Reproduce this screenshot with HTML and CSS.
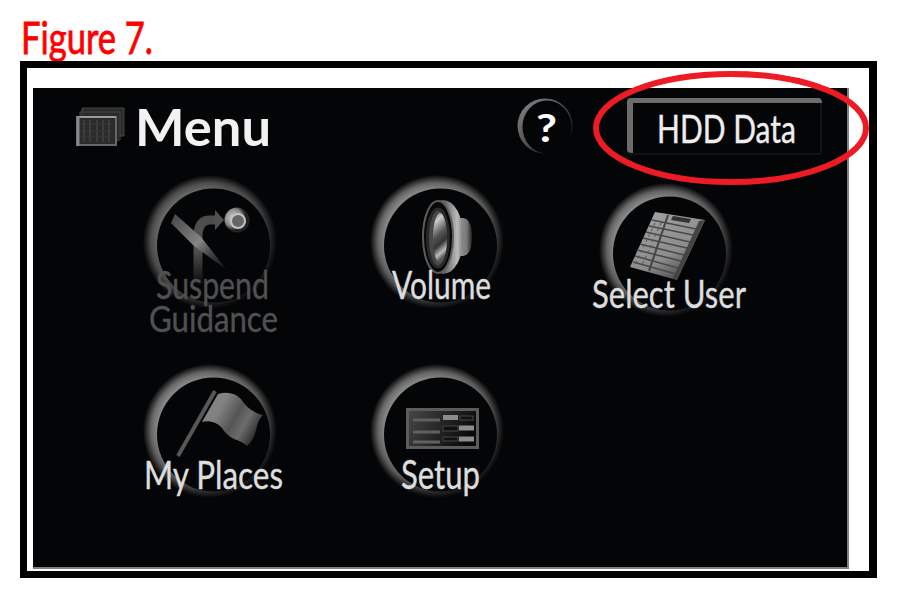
FILE: index.html
```
<!DOCTYPE html>
<html lang="en">
<head>
    <meta charset="UTF-8">
    <meta name="viewport" content="width=device-width, initial-scale=1.0">
    <title>Figure 7</title>
    <link rel="stylesheet" href="styles.css">
</head>
<body>
    <!-- Shared gradients and the round button ring -->
    <svg class="defs" width="0" height="0">
        <defs>
            <radialGradient id="glow">
                <stop offset="0.8" stop-color="#8c8c8c"/>
                <stop offset="0.88" stop-color="#6c6c6c"/>
                <stop offset="0.95" stop-color="#303030"/>
                <stop offset="1" stop-color="#040507"/>
            </radialGradient>
            <linearGradient id="fade" x1="0.15" y1="0.15" x2="0.85" y2="0.9">
                <stop offset="0" stop-color="#fff"/>
                <stop offset="0.5" stop-color="#ccc"/>
                <stop offset="1" stop-color="#444"/>
            </linearGradient>
            <mask id="ringMask" maskUnits="userSpaceOnUse" x="30" y="-5" width="140" height="140">
                <rect x="30" y="-5" width="140" height="140" fill="url(#fade)"/>
            </mask>
            <linearGradient id="edge" x1="0" y1="0" x2="1" y2="1">
                <stop offset="0" stop-color="#888"/>
                <stop offset="0.5" stop-color="#505050"/>
                <stop offset="0.9" stop-color="#08090b"/>
            </linearGradient>
            <linearGradient id="road" gradientUnits="userSpaceOnUse" x1="0" y1="38" x2="0" y2="108">
                <stop offset="0" stop-color="#4c4c4c"/>
                <stop offset="0.5" stop-color="#505050"/>
                <stop offset="1" stop-color="#08090b"/>
            </linearGradient>
            <linearGradient id="slash" x1="0" y1="0" x2="1" y2="1">
                <stop offset="0" stop-color="#444"/>
                <stop offset="0.5" stop-color="#858585"/>
                <stop offset="0.7" stop-color="#444"/>
                <stop offset="1" stop-color="#08090b"/>
            </linearGradient>
            <radialGradient id="ball" cx="0.35" cy="0.4">
                <stop offset="0" stop-color="#ccc"/>
                <stop offset="0.7" stop-color="#888"/>
                <stop offset="1" stop-color="#222"/>
            </radialGradient>
            <linearGradient id="cone" x1="0" y1="0" x2="1" y2="0">
                <stop offset="0" stop-color="#333"/>
                <stop offset="0.55" stop-color="#666"/>
                <stop offset="0.85" stop-color="#bbb"/>
                <stop offset="1" stop-color="#777"/>
            </linearGradient>
            <linearGradient id="magnet" x1="0" y1="0" x2="1" y2="0">
                <stop offset="0" stop-color="#aaa"/>
                <stop offset="0.7" stop-color="#777"/>
                <stop offset="1" stop-color="#222"/>
            </linearGradient>
            <linearGradient id="core" x1="0" y1="0" x2="0.25" y2="1">
                <stop offset="0" stop-color="#555"/>
                <stop offset="0.2" stop-color="#ccc"/>
                <stop offset="0.5" stop-color="#555"/>
                <stop offset="0.7" stop-color="#333"/>
                <stop offset="0.88" stop-color="#bbb"/>
                <stop offset="1" stop-color="#555"/>
            </linearGradient>
            <linearGradient id="flag" x1="0" y1="0" x2="1" y2="0.5">
                <stop offset="0" stop-color="#858585"/>
                <stop offset="0.35" stop-color="#828282"/>
                <stop offset="0.62" stop-color="#555"/>
                <stop offset="0.8" stop-color="#6c6c6c"/>
                <stop offset="1" stop-color="#333"/>
            </linearGradient>
            <linearGradient id="paper" x1="0" y1="0" x2="0.6" y2="1">
                <stop offset="0" stop-color="#a5a5a5"/>
                <stop offset="0.7" stop-color="#8c8c8c"/>
                <stop offset="1" stop-color="#505050"/>
            </linearGradient>
            <linearGradient id="panel" x1="0" y1="0" x2="1" y2="0.3">
                <stop offset="0" stop-color="#484848"/>
                <stop offset="1" stop-color="#0a0a0a"/>
            </linearGradient>
            <g id="ring">
                <circle cx="100" cy="65" r="67" fill="url(#glow)" mask="url(#ringMask)"/>
                <ellipse cx="103.500" cy="68.500" rx="56.500" ry="57" fill="#040507"/>
            </g>
        </defs>
    </svg>

    <figure class="figure">
        <figcaption class="caption">
            <svg width="140" height="61">
                <text x="1" y="53.5" font-size="44.5" textLength="132" lengthAdjust="spacingAndGlyphs">Figure 7.</text>
            </svg>
        </figcaption>

        <div class="frame">
            <div class="screen">
                <header class="header">
                    <svg class="menu-icon" width="50" height="42" viewBox="0 0 50 42">
                        <path d="M7 2h42v28h-4l-4 9V10H5z" fill="#2b2b2b"/>
                        <path d="M7 9V2h42v28h-4M5 10V6h40v28h-4" fill="none" stroke="#444"/>
                        <rect x="2" y="11" width="39" height="28" fill="#2b2b2b" stroke="#666" stroke-width="2"/>
                        <path d="M2 11h39" stroke="#999" stroke-width="2"/>
                        <path d="M3 10v30" stroke="#888" stroke-width="3"/>
                        <path d="M9 14v22M15 14v22M22 14v22M28 14v22M34 14v22" stroke="#3c3c3c" stroke-width="2"/>
                        <path d="M6 18h32M6 25h32M6 31h32" stroke="#383838"/>
                    </svg>
                    <svg class="title" width="140" height="64">
                        <text x="-1" y="58" font-size="52" textLength="136" lengthAdjust="spacingAndGlyphs">Menu</text>
                    </svg>
                    <svg class="help" width="58" height="60" viewBox="0 0 58 60">
                        <circle cx="29" cy="30" r="27.5" fill="url(#edge)"/>
                        <ellipse cx="31" cy="31" rx="24.500" ry="26.500" fill="#040507"/>
                        <text x="20" y="46" font-size="39" textLength="21" lengthAdjust="spacingAndGlyphs">?</text>
                    </svg>
                    <svg class="hdd" width="198" height="60" viewBox="0 0 198 60">
                        <rect x="1" y="1" width="195" height="57" rx="4" fill="#121315"/>
                        <path d="M1 53V5q0-4 4-4h187q4 0 4 5H7v50q-6 0-6-3z" fill="#6c6c6c"/>
                        <rect x="7" y="6" width="187" height="50" fill="#040507"/>
                        <text x="31" y="45.500" font-size="39" textLength="139" lengthAdjust="spacingAndGlyphs">HDD Data</text>
                    </svg>
                </header>

                <main class="menu">
                    <svg class="item dim" viewBox="0 0 200 160">
                        <use href="#ring" opacity="0.75"/>
                        <path d="M88 108V60q0-17 12-17h7" fill="none" stroke="url(#road)" stroke-width="9"/>
                        <path d="M105 33l9 10-9 10z" fill="#505050"/>
                        <path d="M65 37l26 23 26 33-33-24L61 46z" fill="url(#slash)"/>
                        <circle cx="127" cy="43" r="12.500" fill="url(#ball)"/>
                        <circle cx="128" cy="44" r="7" fill="#666" stroke="#c4c4c4" stroke-width="2"/>
                        <text x="46" y="122" font-size="38" textLength="113" lengthAdjust="spacingAndGlyphs">Suspend</text>
                        <text x="39" y="155" font-size="37" textLength="129" lengthAdjust="spacingAndGlyphs">Guidance</text>
                    </svg>
                    <svg class="item" viewBox="0 0 200 160">
                        <use href="#ring"/>
                        <path d="M118 41h8q9 1 9 19t-9 19h-8z" fill="url(#magnet)"/>
                        <ellipse cx="106" cy="60" rx="20.500" ry="37" fill="url(#cone)"/>
                        <ellipse cx="101" cy="60" rx="15" ry="36" fill="#070707" stroke="#5c5c5c" stroke-width="2"/>
                        <ellipse cx="101" cy="61" rx="10.500" ry="29" fill="#484848" stroke="#292929" stroke-width="3"/>
                        <ellipse cx="103" cy="61" rx="7" ry="25" fill="url(#core)"/>
                        <text x="55" y="122" font-size="39" textLength="99" lengthAdjust="spacingAndGlyphs">Volume</text>
                    </svg>
                    <svg class="item lower" viewBox="0 0 200 160">
                        <use href="#ring"/>
                        <path d="M89 27l50 8-28 60-47-13z" fill="url(#paper)"/>
                        <path d="M107 31l18 3-2 4-18-3z" fill="#333"/>
                        <path d="M139 35l-28 60-4-2 26-57z" fill="#444"/>
                        <path d="M86 35l44 9M83 41l44 9M80 47l44 10M77 53l44 10M74 59l44 11M71 65l44 11M69 71l43 12M67 77l43 12" stroke="#484848" stroke-width="1.500"/>
                        <path d="M102 30L83 86" stroke="#444" stroke-width="2"/>
                        <path d="M89 38L70 78M95 38L76 80" stroke="#555" stroke-dasharray="3 3"/>
                        <text x="26" y="123" font-size="39" textLength="154" lengthAdjust="spacingAndGlyphs">Select User</text>
                    </svg>
                    <svg class="item" viewBox="0 0 200 160">
                        <use href="#ring"/>
                        <path d="M105 25L68 90" stroke="#575757" stroke-width="4"/>
                        <path d="M108 28q14-4 23 5 8 13 22 16-5 5-7 15-2 10-9 16-4-4-13-7-8-4-12-11-8-9-20-6z" fill="url(#flag)"/>
                        <text x="34" y="123" font-size="39" textLength="139" lengthAdjust="spacingAndGlyphs">My Places</text>
                    </svg>
                    <svg class="item" viewBox="0 0 200 160">
                        <use href="#ring"/>
                        <rect x="70.500" y="43.500" width="70" height="38" fill="url(#panel)" stroke="#5c5c5c" stroke-width="3"/>
                        <path d="M76 54h27M76 66h27M76 76h27" stroke="#606060" stroke-width="3"/>
                        <g fill="#111" stroke="#484848">
                            <rect x="106" y="60" width="15" height="5"/>
                            <rect x="106" y="71" width="15" height="4"/>
                            <rect x="123" y="50" width="13" height="4"/>
                        </g>
                        <path d="M106 51.500h15M122 62h15M122 73h15" stroke="#8c8c8c" stroke-width="5"/>
                        <text x="64" y="123" font-size="40" textLength="79" lengthAdjust="spacingAndGlyphs">Setup</text>
                    </svg>
                </main>
            </div>
            <svg class="highlight" width="280" height="118" viewBox="0 0 280 118">
                <ellipse cx="140" cy="59" rx="135" ry="54"/>
            </svg>
        </div>
    </figure>
</body>
</html>
```
FILE: styles.css
```
* {
    margin: 0;
    padding: 0;
    box-sizing: border-box;
}

body {
    background: #fff;
    font-family: Lato, 'Open Sans', sans-serif;
    overflow: hidden;
}

svg {
    display: block;
    flex-shrink: 0;
    overflow: visible;
}

.defs {
    position: absolute;
}

.figure {
    width: 857px;
    margin-left: 20px;
}

.caption {
    height: 61px;
}

.caption text {
    fill: #f00;
    stroke: #f00;
    stroke-width: 0.8px;
}

.frame {
    position: relative;
    height: 517px;
    padding: 20px 20px 2px 6px;
    border: 7px solid #000;
    border-right-width: 8px;
}

.screen {
    width: 816px;
    height: 481px;
    background: #040507;
    border-right: 2px solid #808080;
    border-bottom: 2px solid #808080;
}

.header {
    display: flex;
    height: 89px;
}

.menu-icon {
    margin: 18px 0 0 42px;
}

.title {
    margin-left: 11px;
}

.title text {
    fill: #f2f2f2;
    font-weight: 700;
}

.help {
    margin: 8px 0 0 240px;
}

.help text {
    fill: #fff;
    font-weight: 700;
}

.hdd {
    margin: 9px 0 0 52px;
}

.hdd text {
    fill: #eee;
    stroke: #eee;
    stroke-width: 0.4px;
}

.menu {
    display: grid;
    grid-template-columns: 227px 229px 200px;
    grid-template-rows: 189px 160px;
    margin-left: 77px;
}

.item {
    width: 200px;
    height: 160px;
}

.item text {
    fill: #ddd;
    stroke: #ddd;
    stroke-width: 0.4px;
}

.dim text {
    fill: #505050;
    stroke: #505050;
}

.lower {
    margin-top: 8px;
}

/* Red ring drawn over the HDD Data button */
.highlight {
    position: absolute;
    top: 1px;
    left: 564px;
}

.highlight ellipse {
    fill: none;
    stroke: #ed1c24;
    stroke-width: 6px;
}
```
